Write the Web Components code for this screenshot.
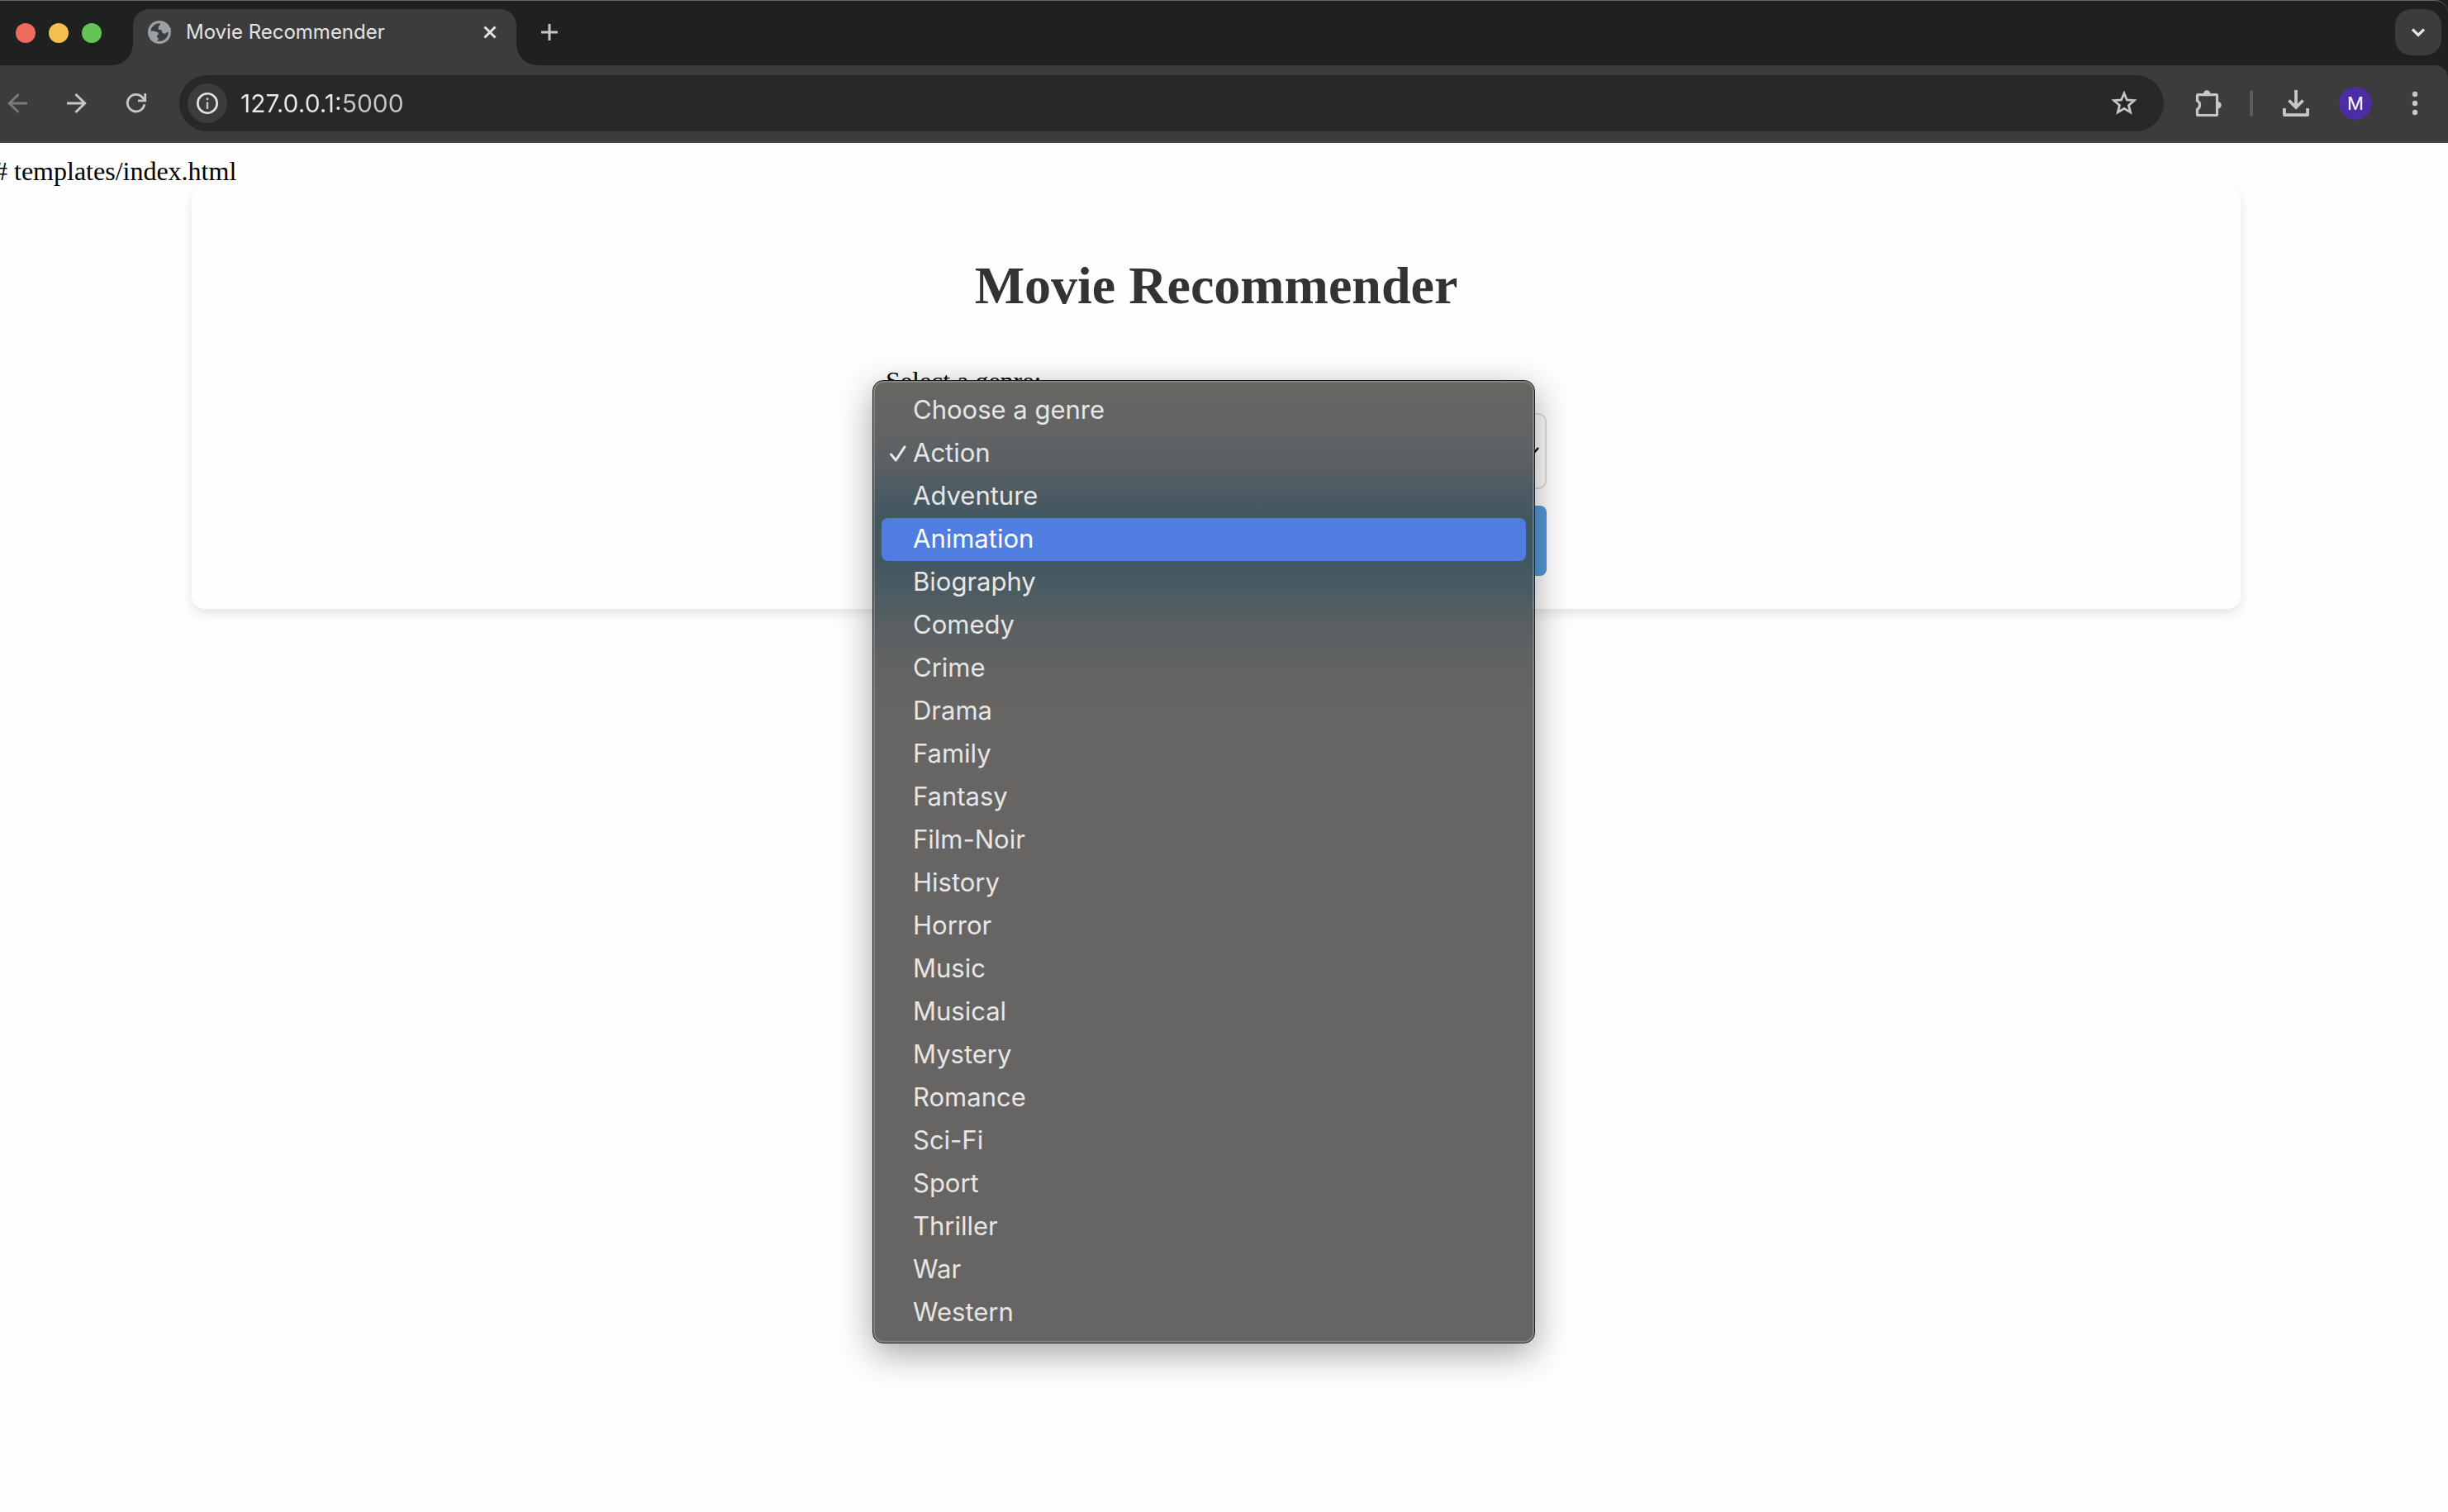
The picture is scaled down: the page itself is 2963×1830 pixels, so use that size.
<!DOCTYPE html>
<html lang="en">
<head>
<meta charset="utf-8">
<title>Movie Recommender</title>
<style>
  html, body { margin: 0; height: 100%; }
  body { background: #fefefe; overflow: hidden; }
</style>
</head>
<body>
<browser-window>
  <browser-tab slot="tab">Movie Recommender</browser-tab>
  <browser-toolbar slot="toolbar" address="127.0.0.1:5000" initial="M"></browser-toolbar>
  <recommender-page></recommender-page>
</browser-window>

<script>
const define = (name, html, setup) => {
  const template = document.createElement('template');
  template.innerHTML = html;
  customElements.define(name, class extends HTMLElement {
    connectedCallback() {
      if (this.shadowRoot) return;
      this.attachShadow({ mode: 'open' }).append(template.content.cloneNode(true));
      if (setup) setup(this, this.shadowRoot);
    }
  });
};

const ICONS = {
  globe: [28, '<circle cx="14" cy="14" r="14" fill="#9aa0a6"/><path d="M15 3.2A11 11 0 0 0 3.3 12.5c2.400 0 6 .2 8.300 1.500 1.800 1 .9 3.500-.6 4v2.500c2.300 0 2.800 2.500-.2 3.900A11 11 0 0 0 24.800 14h-2c-.3 2-3.500 2.300-5 .8-1.300-1.300-.5-3-1.800-3.800h-3.200V7.600c0-2.200 2.200-1.200 2.200-4.400z" fill="#3c3c3c"/><path d="M3.300 13.800c3 .2 7.300-.8 8.700 1.200 1 1.700-.8 2.800-1.300 3.500l.2 5.900A11 11 0 0 1 3.300 13.800z" fill="#9aa0a6"/>'],
  close: [16, '<path d="M1.500 1.500l13 13M14.500 1.500l-13 13" stroke="#e3e3e3" stroke-width="3"/>'],
  plus: [20, '<path d="M10 0v20M0 10h20" stroke="#c7c7c7" stroke-width="3"/>'],
  chevron: [18, '<path d="M2 5.500l7 7 7-7" fill="none" stroke="#e3e3e3" stroke-width="3.200"/>'],
  back: [24, '<path d="M24 12H2M13.500 1L2.300 12l11.200 11" fill="none" stroke="#7a7a7a" stroke-width="3"/>'],
  forward: [24, '<path d="M0 12h22M10.500 1l11.200 11-11.200 11" fill="none" stroke="#c7c7c7" stroke-width="3"/>'],
  reload: [24, '<path d="M21.800 13.200A10.300 10.300 0 1 1 19.500 5l2.500 3" fill="none" stroke="#c7c7c7" stroke-width="2.800"/><path d="M14 8.800h8.700V0" fill="none" stroke="#c7c7c7" stroke-width="2.800"/>'],
  info: [26, '<circle cx="13" cy="13" r="11.700" fill="none" stroke="#e3e3e3" stroke-width="2.600"/><path d="M13 11.500v8.500" stroke="#c7c7c7" stroke-width="2.400"/><circle cx="13" cy="7.800" r="1.500" fill="#c7c7c7"/>'],
  star: [32, '<path d="M16 4l3.400 8 8.800.7-6.700 5.700 2.100 8.500-7.600-4.600-7.600 4.600 2.100-8.500-6.700-5.700 8.800-.7z" fill="none" stroke="#c7c7c7" stroke-width="2.800"/>'],
  puzzle: [32, '<path d="M3.500 5.600h22a1 1 0 0 1 1 1v22.900a1 1 0 0 1-1 1h-22a1 1 0 0 1-1-1v-6.200a6 6 0 0 0 0-10.500V6.600a1 1 0 0 1 1-1z" fill="none" stroke="#c7c7c7" stroke-width="3.200"/><path d="M10 4.500a4.200 4.200 0 0 1 8.400 0zM27.500 14a4.200 4.200 0 0 1 0 8.400z" fill="#c7c7c7"/>'],
  download: [32, '<path d="M16 0v20M7.500 12.500l8.500 8.500 8.500-8.500" fill="none" stroke="#c7c7c7" stroke-width="3.800"/><path d="M1.900 22v7.200a1 1 0 0 0 1 1h26.200a1 1 0 0 0 1-1V22" fill="none" stroke="#c7c7c7" stroke-width="3.800"/>'],
  dots: [32, '<g fill="#c7c7c7"><circle cx="16" cy="5" r="3.200"/><circle cx="16" cy="16" r="3.200"/><circle cx="16" cy="27" r="3.200"/></g>'],
  check: [20, '<path d="M1.500 12l5.800 7L18 2.800" fill="none" stroke="#e6e6e6" stroke-width="3" stroke-linecap="round" stroke-linejoin="round"/>'],
  expand: [16, '<path d="M1 4l7 8 7-8" fill="none" stroke="#000" stroke-width="2.400"/>']
};

define('ui-icon', `
  <style>:host { display: block; flex: none; } svg { display: block; overflow: visible; }</style>
`, (host, root) => {
  const [size, shapes] = ICONS[host.getAttribute('name')];
  root.innerHTML += `<svg width="${size}" height="${size}" viewBox="0 0 ${size} ${size}" aria-hidden="true">${shapes}</svg>`;
});

define('browser-window', `
  <style>
    :host { display: flex; flex-direction: column; height: 100%; font-family: Inter, "Liberation Sans", sans-serif; }
    header { background: #1f2121; }
    .strip { display: flex; align-items: flex-start; height: 68px; padding: 10px 8px 0 19px; border-top: 1px solid #666968; border-top-right-radius: 16px; }
    .lights { display: flex; gap: 16px; padding-top: 17px; width: 142px; }
    .lights i { width: 24px; height: 24px; border-radius: 50%; background: var(--c); }
    button { border: 0; padding: 0; background: none; display: grid; place-items: center; }
    .new { width: 56px; height: 56px; margin-left: 12px; }
    .search { width: 56px; height: 56px; margin-left: auto; border-radius: 20px; background: #3c3c3c; }
    main { flex: 1; min-height: 0; display: flex; flex-direction: column; }
  </style>
  <header>
    <div class="strip">
      <div class="lights"><i style="--c:#ed6a5e"></i><i style="--c:#f5bf4f"></i><i style="--c:#62c555"></i></div>
      <slot name="tab"></slot>
      <button class="new" aria-label="New tab"><ui-icon name="plus"></ui-icon></button>
      <button class="search" aria-label="Search tabs"><ui-icon name="chevron"></ui-icon></button>
    </div>
    <slot name="toolbar"></slot>
  </header>
  <main><slot></slot></main>
`);

define('browser-tab', `
  <style>
    :host { position: relative; display: flex; align-items: center; box-sizing: border-box; width: 464px; height: 68px;
      padding: 0 24px 12px 18px; border-radius: 20px 20px 0 0; background: #3c3c3c; color: #e3e3e3; font-size: 24px; line-height: 32px; }
    :host::before, :host::after { content: ""; position: absolute; bottom: 0; width: 24px; height: 24px; }
    :host::before { right: 100%; background: radial-gradient(circle at 0 0, transparent 23px, #3c3c3c 24px); }
    :host::after { left: 100%; background: radial-gradient(circle at 100% 0, transparent 23px, #3c3c3c 24px); }
    span { flex: 1; margin-left: 18px; white-space: nowrap; }
    button { border: 0; padding: 0; background: none; }
  </style>
  <ui-icon name="globe"></ui-icon>
  <span><slot></slot></span>
  <button aria-label="Close tab"><ui-icon name="close"></ui-icon></button>
`);

define('browser-toolbar', `
  <style>
    :host { display: flex; align-items: center; box-sizing: border-box; height: 94px; padding: 0 24px 0 9px;
      background: #3c3c3c; border-bottom: 2px solid #474747; border-top-right-radius: 16px; }
    button { border: 0; padding: 0; background: none; flex: none; }
    nav { display: flex; gap: 48px; margin-right: 40px; }
    .box { flex: 1; display: flex; align-items: center; height: 68px; box-sizing: border-box; padding: 0 32px 0 10px;
      border-radius: 34px; background: #282828; }
    .site { display: grid; place-items: center; width: 48px; height: 48px; border-radius: 50%; background: #3c3c3c; margin-right: 16px; }
    input { flex: 1; min-width: 0; height: 40px; border: 0; padding: 0; outline: 0; font: 30px/40px Inter, "Liberation Sans", sans-serif;
      color: #e3e3e3; background: linear-gradient(to right, #e8e8e8 122px, #c7c7c7 122px); -webkit-background-clip: text; background-clip: text;
      -webkit-text-fill-color: transparent; }
    .tools { display: flex; align-items: center; margin-left: 38px; }
    hr { width: 4px; height: 32px; margin: 0 36px 0 34px; border: 0; border-radius: 2px; background: #5e5e5e; }
    .who { width: 40px; height: 40px; margin: 0 36px; border-radius: 50%; background: #4c2da3; color: #fff;
      font: 22px/40px Inter, "Liberation Sans", sans-serif; }
  </style>
  <nav>
    <button aria-label="Back" disabled><ui-icon name="back"></ui-icon></button>
    <button aria-label="Forward"><ui-icon name="forward"></ui-icon></button>
    <button aria-label="Reload"><ui-icon name="reload"></ui-icon></button>
  </nav>
  <div class="box">
    <button class="site" aria-label="Site information"><ui-icon name="info"></ui-icon></button>
    <input type="text" aria-label="Address" spellcheck="false">
    <button aria-label="Bookmark"><ui-icon name="star"></ui-icon></button>
  </div>
  <div class="tools">
    <button aria-label="Extensions"><ui-icon name="puzzle"></ui-icon></button>
    <hr>
    <button aria-label="Downloads"><ui-icon name="download"></ui-icon></button>
    <button class="who"></button>
    <button aria-label="Menu"><ui-icon name="dots"></ui-icon></button>
  </div>
`, (host, root) => {
  root.querySelector('input').value = host.getAttribute('address');
  root.querySelector('.who').textContent = host.getAttribute('initial');
});

define('recommender-page', `
  <style>
    /* The document is wider than the visible window: it runs off both side edges. */
    :host { display: block; margin: 0 -4px 0 -23px; padding: 16px; font: 32px/37px "Liberation Serif", serif; color: #000; }
    section { box-sizing: border-box; max-width: 2480px; margin: 0 auto; padding: 40px; border-radius: 16px; background: #fefefe;
      box-shadow: 0 6px 14px rgba(0,0,0,.1); }
    h1 { margin: 43px 0 60px; font-size: 64px; line-height: 74px; font-weight: 700; text-align: center; color: #333; }
    form { display: flex; flex-direction: column; gap: 20px; max-width: 800px; margin: 0 auto; }
    .submit { height: 85px; border: 0; border-radius: 8px; background: #539ada; }
  </style>
  # templates/index.html
  <section>
    <h1>Movie Recommender</h1>
    <form>
      <genre-field></genre-field>
      <button type="button" class="submit" aria-label="Submit"></button>
    </form>
  </section>
`);

const GENRES = ['Choose a genre', 'Action', 'Adventure', 'Animation', 'Biography', 'Comedy', 'Crime', 'Drama', 'Family', 'Fantasy',
  'Film-Noir', 'History', 'Horror', 'Music', 'Musical', 'Mystery', 'Romance', 'Sci-Fi', 'Sport', 'Thriller', 'War', 'Western'];

define('genre-field', `
  <style>
    :host { display: flex; flex-direction: column; gap: 20px; }
    .field { position: relative; display: flex; }
    select { flex: 1; height: 92px; box-sizing: border-box; padding: 0 40px 0 20px; border: 2px solid #ddd; border-radius: 10px;
      background: #fefefe; appearance: none; font: 32px/37px Inter, "Liberation Sans", sans-serif; color: transparent; }
    .field > ui-icon { position: absolute; right: 9px; top: 38px; }
    genre-menu { position: absolute; left: -16px; top: -40px; z-index: 1; width: 802px; }
  </style>
  <label for="genre">Select a genre:</label>
  <div class="field">
    <select id="genre"></select>
    <ui-icon name="expand"></ui-icon>
    <genre-menu selected="Action" active="Animation"></genre-menu>
  </div>
`, (host, root) => {
  root.querySelector('select').append(...GENRES.map(g => new Option(g, g, false, g === 'Action')));
});

define('genre-menu', `
  <style>
    :host { display: block; box-sizing: border-box; padding: 8px; border: 1px solid #1c1c1c; border-radius: 13px;
      background: linear-gradient(#666561 0, #646464 50px, #5b6063 100px, #4b5a63 136px, #435760 166px, #435760 222px, #4b5b63 254px, #595f62 296px, #636363 350px, #666563 410px);
      box-shadow: inset 0 0 0 2px rgba(255,255,255,.2), 0 12px 44px rgba(0,0,0,.36); font-family: Inter, "Liberation Sans", sans-serif; font-size: 31px; line-height: 50px; color: #e6e6e6; }
    ul { margin: 0; padding: 2px; list-style: none; }
    li { display: flex; align-items: center; height: 52px; box-sizing: border-box; padding-bottom: 2px; border-radius: 8px; }
    .mark { display: flex; width: 38px; box-sizing: border-box; padding-left: 10px; flex: none; }
    li.active { background: #507de0; color: #fff; }
  </style>
  <ul role="listbox"></ul>
`, (host, root) => {
  root.querySelector('ul').innerHTML = GENRES.map(g => {
    const picked = g === host.getAttribute('selected');
    const active = g === host.getAttribute('active');
    return `<li role="option" aria-selected="${picked}" class="${active ? 'active' : ''}"><span class="mark">${picked ? '<ui-icon name="check"></ui-icon>' : ''}</span>${g}</li>`;
  }).join('');
});
</script>
</body>
</html>
